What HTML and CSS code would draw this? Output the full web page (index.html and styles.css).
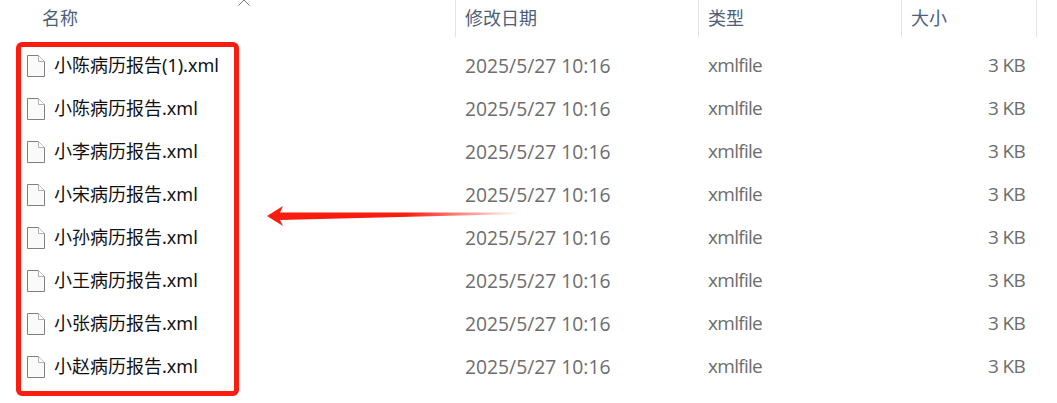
FILE: index.html
```html
<!DOCTYPE html>
<html lang="zh-CN">
<head>
<meta charset="utf-8">
<title>文件列表</title>
<link rel="stylesheet" href="styles.css">
</head>
<body>
<main class="explorer">
  <svg class="sort-caret" width="14" height="6" viewBox="0 0 14 6"><path d="M1.500 5.500 7 0l5.500 5.500" fill="none" stroke="#7a7a7a" stroke-width="1"/></svg>
  <div class="header">
    <div class="col-name head">名称</div>
    <div class="col-date head">修改日期</div>
    <div class="col-type head">类型</div>
    <div class="col-size head">大小</div>
  </div>
  <div class="rows">
    <div class="row"><div class="col-name name"><svg class="file" viewBox="0 0 18 22"><path d="M.5.5h11l6 6v15H.5z" fill="#fafafa" stroke="#808080"/><path d="M11.500.5v6h6" fill="#fff" stroke="#b0b0b0"/></svg>小陈病历报告(1).xml</div><div class="col-date">2025/5/27 10:16</div><div class="col-type">xmlfile</div><div class="col-size num">3 KB</div></div>
    <div class="row"><div class="col-name name"><svg class="file" viewBox="0 0 18 22"><path d="M.5.5h11l6 6v15H.5z" fill="#fafafa" stroke="#808080"/><path d="M11.500.5v6h6" fill="#fff" stroke="#b0b0b0"/></svg>小陈病历报告.xml</div><div class="col-date">2025/5/27 10:16</div><div class="col-type">xmlfile</div><div class="col-size num">3 KB</div></div>
    <div class="row"><div class="col-name name"><svg class="file" viewBox="0 0 18 22"><path d="M.5.5h11l6 6v15H.5z" fill="#fafafa" stroke="#808080"/><path d="M11.500.5v6h6" fill="#fff" stroke="#b0b0b0"/></svg>小李病历报告.xml</div><div class="col-date">2025/5/27 10:16</div><div class="col-type">xmlfile</div><div class="col-size num">3 KB</div></div>
    <div class="row"><div class="col-name name"><svg class="file" viewBox="0 0 18 22"><path d="M.5.5h11l6 6v15H.5z" fill="#fafafa" stroke="#808080"/><path d="M11.500.5v6h6" fill="#fff" stroke="#b0b0b0"/></svg>小宋病历报告.xml</div><div class="col-date">2025/5/27 10:16</div><div class="col-type">xmlfile</div><div class="col-size num">3 KB</div></div>
    <div class="row"><div class="col-name name"><svg class="file" viewBox="0 0 18 22"><path d="M.5.5h11l6 6v15H.5z" fill="#fafafa" stroke="#808080"/><path d="M11.500.5v6h6" fill="#fff" stroke="#b0b0b0"/></svg>小孙病历报告.xml</div><div class="col-date">2025/5/27 10:16</div><div class="col-type">xmlfile</div><div class="col-size num">3 KB</div></div>
    <div class="row"><div class="col-name name"><svg class="file" viewBox="0 0 18 22"><path d="M.5.5h11l6 6v15H.5z" fill="#fafafa" stroke="#808080"/><path d="M11.500.5v6h6" fill="#fff" stroke="#b0b0b0"/></svg>小王病历报告.xml</div><div class="col-date">2025/5/27 10:16</div><div class="col-type">xmlfile</div><div class="col-size num">3 KB</div></div>
    <div class="row"><div class="col-name name"><svg class="file" viewBox="0 0 18 22"><path d="M.5.5h11l6 6v15H.5z" fill="#fafafa" stroke="#808080"/><path d="M11.500.5v6h6" fill="#fff" stroke="#b0b0b0"/></svg>小张病历报告.xml</div><div class="col-date">2025/5/27 10:16</div><div class="col-type">xmlfile</div><div class="col-size num">3 KB</div></div>
    <div class="row"><div class="col-name name"><svg class="file" viewBox="0 0 18 22"><path d="M.5.5h11l6 6v15H.5z" fill="#fafafa" stroke="#808080"/><path d="M11.500.5v6h6" fill="#fff" stroke="#b0b0b0"/></svg>小赵病历报告.xml</div><div class="col-date">2025/5/27 10:16</div><div class="col-type">xmlfile</div><div class="col-size num">3 KB</div></div>
  </div>
  <div class="highlight"></div>
  <svg class="arrow" width="256" height="22" viewBox="0 0 256 22">
    <defs><linearGradient id="fade" x1="0" x2="1" y1="0" y2="0"><stop offset="0.55" stop-color="#fb1c10"/><stop offset="1" stop-color="#fb1c10" stop-opacity="0"/></linearGradient></defs>
    <path d="M1 11 17 1l-3 6.500L255 7.500v1.500L14 15l3 6z" fill="url(#fade)"/>
  </svg>
</main>
</body>
</html>
```

FILE: styles.css
```css
html, body {
  margin: 0;
  padding: 0;
  background: #fff;
}
.explorer {
  position: relative;
  width: 1057px;
  height: 403px;
  overflow: hidden;
  font-family: "Open Sans", "Noto Sans CJK SC", sans-serif;
  font-size: 19px;
  color: #6d6d6d;
}
.header, .row {
  display: grid;
  grid-template-columns: 456px 243px 203px 135px;
}
.header {
  height: 37px;
  align-items: stretch;
}
.head {
  color: #4c607a;
  font-family: "Noto Sans CJK SC", sans-serif;
  font-size: 18px;
  line-height: 35px;
  border-right: 1px solid #e3e3e3;
  box-sizing: border-box;
}
.header .col-name { padding-left: 42px; }
.header .col-date, .row .col-date { padding-left: 9px; }
.header .col-type, .row .col-type { padding-left: 9px; }
.header .col-size { padding-left: 9px; }
.rows {
  padding-top: 7px;
}
.row {
  height: 43px;
  align-items: center;
  line-height: 43px;
}
.row .col-date {
  font-size: 19.300px;
}
.row .col-type, .row .col-size {
  letter-spacing: -0.700px;
}
.name {
  display: flex;
  align-items: center;
  padding-left: 27px;
  color: #111;
  font-family: "Noto Sans", "Noto Sans CJK SC", sans-serif;
  font-size: 18px;
}
.file {
  width: 18px;
  height: 22px;
  margin-right: 9px;
  flex: none;
}
.num {
  text-align: right;
  padding-right: 12px;
}
.highlight {
  position: absolute;
  left: 16px;
  top: 42px;
  width: 213px;
  height: 344px;
  border: 5px solid #fb1c10;
  border-radius: 6px;
}
.arrow {
  position: absolute;
  left: 266px;
  top: 205px;
}
.sort-caret {
  position: absolute;
  left: 237px;
  top: 0;
}
```
